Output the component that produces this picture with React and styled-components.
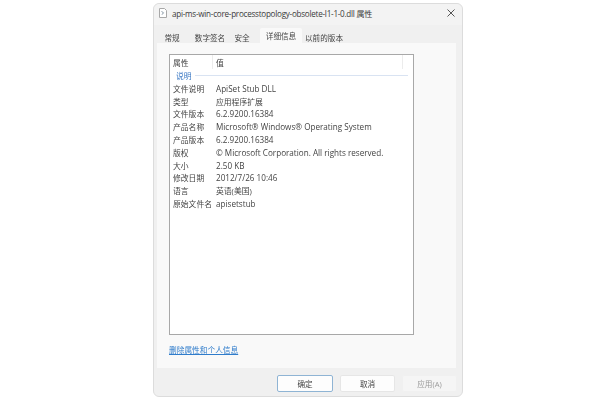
import React from "react";
import styled, { createGlobalStyle } from "styled-components";

const GlobalStyle = createGlobalStyle`
  html, body {
    margin: 0;
    background: #fff;
  }
  body {
    font-family: "Open Sans", "Noto Sans CJK SC", sans-serif;
  }
`;

const Page = styled.div`
  width: 600px;
  height: 400px;
  box-sizing: border-box;
  padding: 3px 0 0 153px;
  overflow: hidden;
`;

const Dialog = styled.div`
  width: 310px;
  height: 394px;
  box-sizing: border-box;
  background: #f0f0f0;
  border: 1px solid #dcdcdc;
  border-radius: 6px;
  display: flex;
  flex-direction: column;
  color: #444;
  filter: blur(0.35px);
`;

const TitleBar = styled.div`
  height: 21px;
  box-sizing: border-box;
  display: flex;
  align-items: center;
  padding: 0 7px 3px 5px;
  gap: 5px;
  background: #f3f3f3;
  border-radius: 6px 6px 0 0;
`;

const Title = styled.div`
  flex: 1;
  font-size: 8.1px;
  letter-spacing: -0.25px;
  color: #3a3a3a;
  white-space: nowrap;
`;

const Tabs = styled.div`
  display: flex;
  height: 18px;
  padding-left: 3px;
  align-items: flex-end;
`;

const Tab = styled.div`
  height: ${(p) => (p.$active ? "15px" : "11px")};
  width: ${(p) => p.$w}px;
  margin-left: ${(p) => p.$gap || 0}px;
  display: flex;
  align-items: center;
  justify-content: center;
  font-size: 7.6px;
  white-space: nowrap;
  background: ${(p) => (p.$active ? "#f9f9f9" : "transparent")};
  border-radius: 2px 2px 0 0;
`;

const Panel = styled.div`
  margin: 0 6px 0 3px;
  height: 325px;
  box-sizing: border-box;
  background: #f9f9f9;
  padding: 11px 0 0 12px;
  display: flex;
  flex-direction: column;
`;

const ListBox = styled.div`
  width: 245px;
  height: 281px;
  box-sizing: border-box;
  background: #fff;
  border: 1px solid #a8a8a8;
  display: flex;
  flex-direction: column;
  font-size: 7.8px;
`;

const Header = styled.div`
  display: flex;
  height: 14px;
  flex-shrink: 0;
`;

const HeaderCell = styled.div`
  width: ${(p) => p.$w}px;
  box-sizing: border-box;
  padding-left: 3px;
  border-right: 1px solid #ececec;
  display: flex;
  align-items: center;
`;

const Group = styled.div`
  display: flex;
  align-items: center;
  height: 12px;
  padding: 0 5px 0 6px;
  gap: 3px;
  margin-bottom: 1px;
  color: #3a78c4;
`;

const GroupLine = styled.div`
  flex: 1;
  height: 1px;
  background: #d9e3f2;
`;

const Row = styled.div`
  display: flex;
  align-items: center;
  height: 12.8px;
  white-space: nowrap;
`;

const Key = styled.div`
  width: 43px;
  padding-left: 3px;
`;

const Value = styled.div`
  font-size: ${(p) => (p.$cjk ? "7.8px" : "8.15px")};
`;

const Link = styled.a`
  margin-top: 9px;
  font-size: 7.7px;
  color: #2f7ccb;
  text-decoration: underline;
`;

const Footer = styled.div`
  display: flex;
  justify-content: flex-end;
  gap: 7px;
  padding: 7px 5px 0 0;
`;

const Button = styled.div`
  width: ${(p) => p.$w}px;
  height: 17px;
  box-sizing: border-box;
  display: flex;
  align-items: center;
  justify-content: center;
  font-size: 7.6px;
  border-radius: 2px;
  background: ${(p) => (p.$disabled ? "#f5f5f5" : "#fdfdfd")};
  color: ${(p) => (p.$disabled ? "#9a9a9a" : "#444")};
  border: 1px solid ${(p) => (p.$primary ? "#8fb4d4" : p.$disabled ? "#f0f0f0" : "#e6e6e6")};
`;

const rows = [
  ["文件说明", "ApiSet Stub DLL"],
  ["类型", "应用程序扩展", true],
  ["文件版本", "6.2.9200.16384"],
  ["产品名称", "Microsoft® Windows® Operating System"],
  ["产品版本", "6.2.9200.16384"],
  ["版权", "© Microsoft Corporation. All rights reserved."],
  ["大小", "2.50 KB"],
  ["修改日期", "2012/7/26 10:46"],
  ["语言", "英语(美国)", true],
  ["原始文件名", "apisetstub"],
];

const FileIcon = () => (
  <svg width="8" height="10" viewBox="0 0 8 10">
    <path d="M.5.5h5L7.5 2.500v7H.5z" fill="#fff" stroke="#a8a8a8" />
    <path d="M2.500 3.500l2 1.200-1.500 2" fill="none" stroke="#8a9aa8" />
  </svg>
);

const CloseIcon = () => (
  <svg width="8" height="8" viewBox="0 0 8 8">
    <path d="M.5.5l7 7M7.500.5l-7 7" stroke="#555" strokeWidth="1" />
  </svg>
);

export default function App() {
  return (
    <Page>
      <GlobalStyle />
      <Dialog>
        <TitleBar>
          <FileIcon />
          <Title>api-ms-win-core-processtopology-obsolete-l1-1-0.dll 属性</Title>
          <CloseIcon />
        </TitleBar>
        <Tabs>
          <Tab $w={30}>常规</Tab>
          <Tab $w={46}>数字签名</Tab>
          <Tab $w={18}>安全</Tab>
          <Tab $w={42} $gap={9} $active>详细信息</Tab>
          <Tab $w={44}>以前的版本</Tab>
        </Tabs>
        <Panel>
          <ListBox>
            <Header>
              <HeaderCell $w={43}>属性</HeaderCell>
              <HeaderCell $w={190}>值</HeaderCell>
            </Header>
            <Group>
              说明
              <GroupLine />
            </Group>
            {rows.map(([k, v, cjk]) => (
              <Row key={k}>
                <Key>{k}</Key>
                <Value $cjk={cjk}>{v}</Value>
              </Row>
            ))}
          </ListBox>
          <Link>删除属性和个人信息</Link>
        </Panel>
        <Footer>
          <Button $w={56} $primary>确定</Button>
          <Button $w={55}>取消</Button>
          <Button $w={55} $disabled>应用(A)</Button>
        </Footer>
      </Dialog>
    </Page>
  );
}
